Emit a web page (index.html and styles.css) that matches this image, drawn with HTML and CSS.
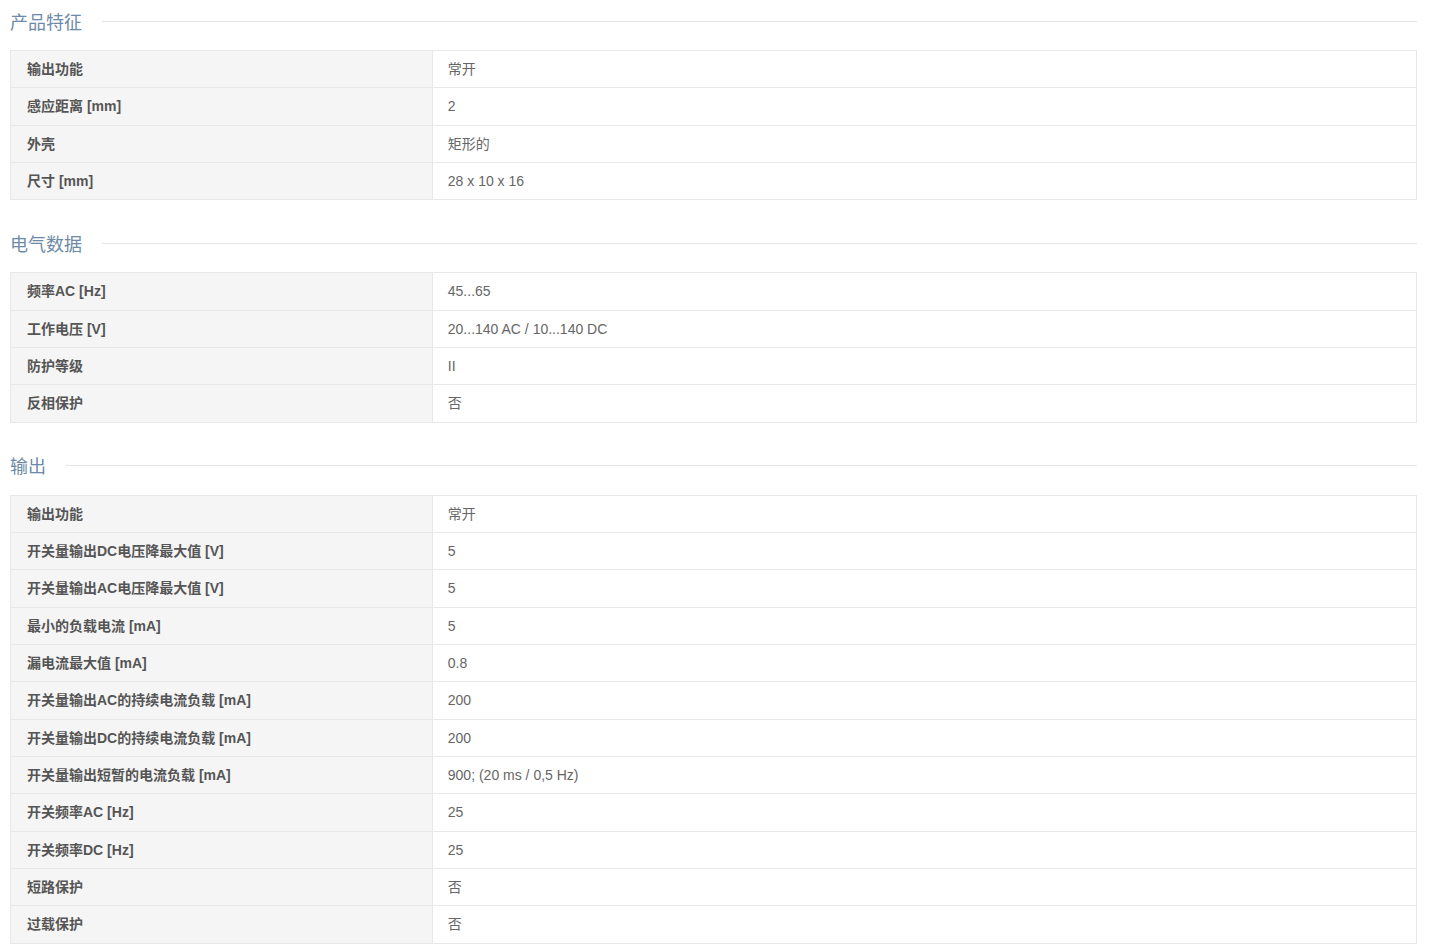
FILE: index.html
```html
<!DOCTYPE html>
<html lang="zh">
<head>
<meta charset="utf-8">
<title>产品参数</title>
<link rel="stylesheet" href="styles.css">
</head>
<body>
<div class="page">
  <section class="group">
    <h2 class="group-title"><span class="group-name">产品特征</span></h2>
    <table class="spec">
      <tr><th>输出功能</th><td>常开</td></tr>
      <tr><th>感应距离 [mm]</th><td>2</td></tr>
      <tr><th>外壳</th><td>矩形的</td></tr>
      <tr><th>尺寸 [mm]</th><td>28 x 10 x 16</td></tr>
    </table>
  </section>
  <section class="group">
    <h2 class="group-title"><span class="group-name">电气数据</span></h2>
    <table class="spec">
      <tr><th>频率AC [Hz]</th><td>45...65</td></tr>
      <tr><th>工作电压 [V]</th><td>20...140 AC / 10...140 DC</td></tr>
      <tr><th>防护等级</th><td>II</td></tr>
      <tr><th>反相保护</th><td>否</td></tr>
    </table>
  </section>
  <section class="group">
    <h2 class="group-title"><span class="group-name">输出</span></h2>
    <table class="spec">
      <tr><th>输出功能</th><td>常开</td></tr>
      <tr><th>开关量输出DC电压降最大值 [V]</th><td>5</td></tr>
      <tr><th>开关量输出AC电压降最大值 [V]</th><td>5</td></tr>
      <tr><th>最小的负载电流 [mA]</th><td>5</td></tr>
      <tr><th>漏电流最大值 [mA]</th><td>0.8</td></tr>
      <tr><th>开关量输出AC的持续电流负载 [mA]</th><td>200</td></tr>
      <tr><th>开关量输出DC的持续电流负载 [mA]</th><td>200</td></tr>
      <tr><th>开关量输出短暂的电流负载 [mA]</th><td>900; (20 ms / 0,5 Hz)</td></tr>
      <tr><th>开关频率AC [Hz]</th><td>25</td></tr>
      <tr><th>开关频率DC [Hz]</th><td>25</td></tr>
      <tr><th>短路保护</th><td>否</td></tr>
      <tr><th>过载保护</th><td>否</td></tr>
    </table>
  </section>
</div>
</body>
</html>
```
FILE: styles.css
```css
html, body {
  margin: 0;
  padding: 0;
  background: #ffffff;
}
body {
  font-family: "Liberation Sans", Arial, "Noto Sans CJK SC", sans-serif;
  font-size: 14px;
  color: #666666;
}
.page {
  padding: 0 12px 0 10px;
}
.group {
  margin-bottom: 22px;
}
.group-title {
  display: flex;
  align-items: center;
  height: 42px;
  margin: 0 0 8px 0;
  font-size: 18px;
  font-weight: normal;
  color: #6d8aa6;
  line-height: 24px;
}
.group-name {
  padding-top: 3px;
}
.group-title::after {
  content: "";
  flex: 1;
  height: 1px;
  background: #e5e5e5;
  margin-left: 20px;
}
.spec {
  width: 100%;
  border-collapse: collapse;
  table-layout: fixed;
}
.spec th,
.spec td {
  box-sizing: border-box;
  border: 1px solid #e8e8e8;
  padding: 8px 16px 8px 16px;
  line-height: 20.33px;
  text-align: left;
  vertical-align: middle;
}
.spec th {
  width: 30%;
  background: #f5f5f5;
  color: #555555;
  font-weight: bold;
}
.spec td {
  background: #ffffff;
  color: #666666;
  padding-left: 15px;
}
```
